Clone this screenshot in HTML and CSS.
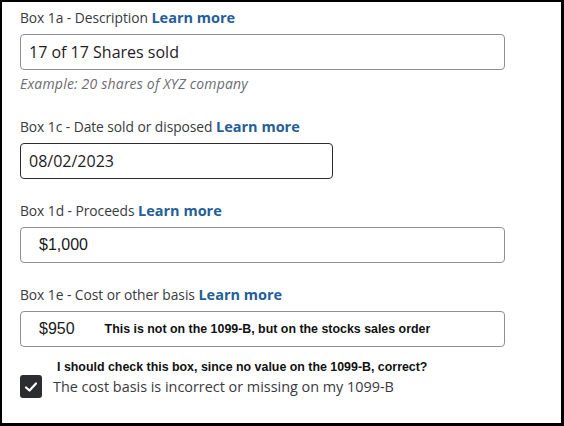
FILE: index.html
```html
<!DOCTYPE html>
<html>
<head>
<meta charset="utf-8">
<link rel="stylesheet" href="styles.css">
</head>
<body>
<div class="frame">
  <div class="field f1a">
    <div class="label">Box 1a - Description <a class="learn">Learn more</a></div>
    <div class="input wide"><span class="val">17 of 17 Shares sold</span></div>
    <div class="hint">Example: 20 shares of XYZ company</div>
  </div>
  <div class="field f1c">
    <div class="label">Box 1c - Date sold or disposed <a class="learn">Learn more</a></div>
    <div class="input narrow focused"><span class="val">08/02/2023</span></div>
  </div>
  <div class="field f1d">
    <div class="label">Box 1d - Proceeds <a class="learn">Learn more</a></div>
    <div class="input wide money"><span class="num">$1,000</span></div>
  </div>
  <div class="field f1e">
    <div class="label">Box 1e - Cost or other basis <a class="learn">Learn more</a></div>
    <div class="input wide money"><span class="num">$950</span><span class="note">This is not on the 1099-B, but on the stocks sales order</span></div>
  </div>
  <div class="question">I should check this box, since no value on the 1099-B, correct?</div>
  <div class="check-row">
    <span class="box"><svg width="14" height="12" viewBox="0 0 14 12"><path d="M2 6.5 L5.5 9.5 L12 2.5" fill="none" stroke="#fff" stroke-width="2.2" stroke-linecap="round" stroke-linejoin="round"/></svg></span>
    <span class="check-label">The cost basis is incorrect or missing on my 1099-B</span>
  </div>
</div>
</body>
</html>
```
FILE: styles.css
```css
html, body { margin: 0; padding: 0; background: #fff; }
.frame {
  box-sizing: border-box;
  width: 564px;
  height: 426px;
  border-top: 2px solid #000;
  border-left: 2px solid #000;
  border-right: 3px solid #000;
  border-bottom: 3px solid #000;
  padding: 6px 0 0 18px;
  display: flex;
  flex-direction: column;
  font-family: "Open Sans", "Liberation Sans", sans-serif;
  color: #393a3d;
  overflow: hidden;
}
.field { display: flex; flex-direction: column; }
.label { font-size: 13.8px; line-height: 20px; height: 20px; color: #393a3d; letter-spacing: -0.05px; }
.learn { font-weight: 700; color: #245e99; font-size: 14.5px; letter-spacing: 0; }
.input {
  box-sizing: border-box;
  margin-top: 6px;
  height: 36px;
  border: 1px solid #8d9096;
  border-radius: 4px;
  display: flex;
  align-items: center;
  padding-left: 8px;
}
.wide { width: 485px; }
.narrow { width: 313px; }
.focused { border-color: #2a2b2e; }
.val { font-size: 16px; color: #1f2023; }
.money { padding-left: 18px; }
.num { font-family: "Liberation Sans", Arial, sans-serif; font-size: 16px; color: #1a1a1a; }
.note { font-family: "Liberation Sans", Arial, sans-serif; font-weight: 700; font-size: 12.4px; color: #111; margin-left: 30px; }
.hint { margin-top: 4px; font-size: 14px; line-height: 20px; font-style: italic; color: #6b6c72; letter-spacing: 0.2px; }
.f1c { margin-top: 23px; }
.f1d { margin-top: 22px; }
.f1e { margin-top: 22px; }
.question {
  margin-top: 12px;
  padding-left: 37px;
  font-family: "Liberation Sans", Arial, sans-serif;
  font-weight: 700;
  font-size: 12.4px;
  line-height: 16px;
  color: #111;
}
.check-row { margin-top: 0; display: flex; align-items: center; }
.box {
  width: 22px; height: 23px;
  background: #2b2d30;
  border-radius: 3px;
  display: flex; align-items: center; justify-content: center;
}
.check-label { margin-left: 11px; font-size: 14.4px; color: #393a3d; font-weight: 400; }
```
